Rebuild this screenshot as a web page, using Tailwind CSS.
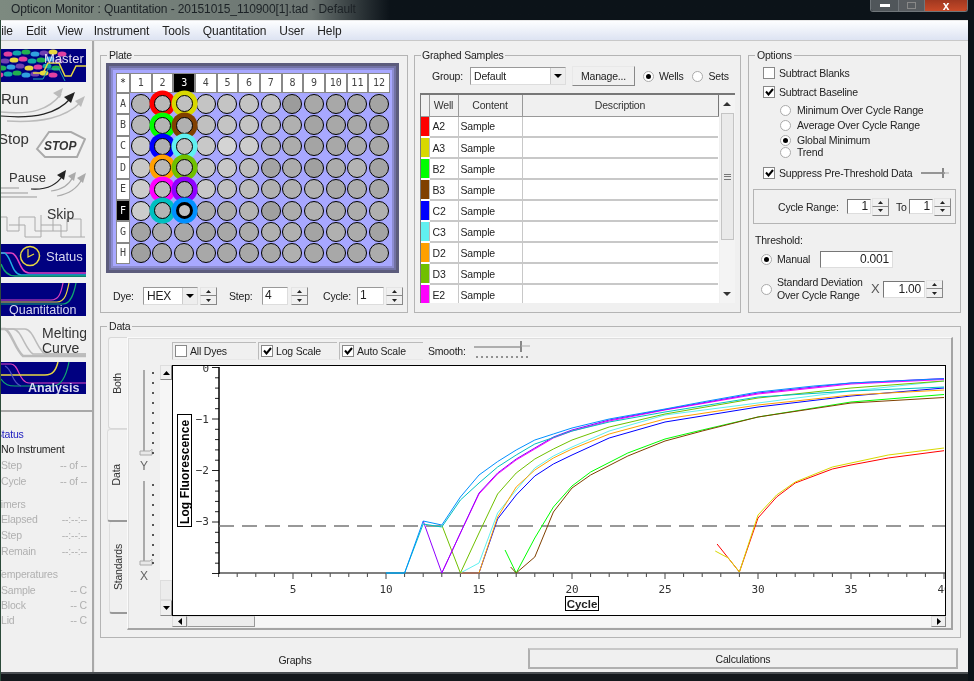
<!DOCTYPE html>
<html lang="en">
<head>
  <meta charset="UTF-8" />
  <title>Opticon Monitor : Quantitation</title>
  <script src="https://cdn.jsdelivr.net/npm/@tailwindcss/browser@4"></script>
</head>
<body class="bg-[#0b1218]">
<div class="w-[974px] h-[681px] overflow-hidden flex flex-col font-['Liberation_Sans',Arial,sans-serif] text-[10.5px] tracking-[-0.2px] leading-[14px] text-[#222] bg-[#0b1218] blur-[0.35px]">

  <!-- Title bar -->
  <div class="h-[20px] shrink-0 flex items-start justify-between bg-gradient-to-r from-[#7d8a80] via-[#6c7572] via-32% to-[#0c1319] to-40%">
    <div class="pl-[11px] pt-[1px] text-[12px] tracking-[-0.1px] leading-[16px] text-[#1c2226] whitespace-nowrap">Opticon Monitor : Quantitation - 20151015_110900[1].tad - Default</div>
    <div class="flex h-[12px] w-[98px] mr-[6px] border border-t-0 border-[#70767a] rounded-b-[3px] overflow-hidden">
      <span class="w-[28px] flex items-center justify-center bg-[#50565a] border-r border-[#70767a]"><span class="w-[10px] h-[3px] bg-white"></span></span>
      <span class="w-[26px] flex items-center justify-center bg-[#585c60] border-r border-[#70767a]"><span class="w-[9px] h-[7px] border border-[#888]"></span></span>
      <span class="flex-1 flex items-center justify-center bg-gradient-to-b from-[#a03820] to-[#c84a28] text-white text-[12px] font-bold leading-[10px]">x</span>
    </div>
  </div>

  <div class="flex-1 min-h-0 flex mr-[6px] border-l border-[#2c4a3a] overflow-hidden">
    <div class="flex-1 min-w-0 flex flex-col">
      <!-- Menu -->
      <div class="h-[20px] shrink-0 flex gap-[13px] items-center text-[12px] tracking-[-0.1px] whitespace-nowrap bg-gradient-to-b from-[#fdfeff] to-[#dde3f2] border-t border-[#e8e8e8] overflow-hidden">
        <span class="-ml-[7px]">File</span><span>Edit</span><span class="-ml-[2px]">View</span><span class="-ml-[2px]">Instrument</span><span>Tools</span><span>Quantitation</span><span>User</span><span>Help</span>
      </div>

      <div class="flex-1 min-h-0 flex bg-[#f0f0f0] border-t border-[#c8c8c8]">
        <!-- Sidebar -->
        <aside class="w-[93px] shrink-0 flex flex-col border-r-[2px] border-[#a8a8a8]">
          <div class="h-[371px] shrink-0 pt-[8px] border-b-[2px] border-[#a8a8a8] overflow-hidden">
            <svg class="block" width="85" height="33" viewBox="0 0 85 33">
              <rect width="85" height="33" fill="#000080"/>
              <g id="master-dots"></g>
              <path d="M32 24 H42 L47 14 H58 L64 27 H70 L75 17 H85" fill="none" stroke="#e8d840" stroke-width="1.5"/>
              <path d="M32 30 H42 L47 20 H58 L64 32" fill="none" stroke="#20b0b0" stroke-width="1"/>
              <text x="43" y="14" font-size="13" letter-spacing="0" fill="#e0dcf0" font-family="Liberation Sans">Master</text>
            </svg>
            <svg class="block" width="85" height="41" viewBox="0 0 85 41">
              <text x="0" y="22" font-size="15" letter-spacing="0" fill="#333" font-family="Liberation Sans">Run</text>
              <path d="M0 30 C30 33 48 28 60 12" fill="none" stroke="#bbb" stroke-width="1.5"/><path d="M62 6 L52 11 L59 16 Z" fill="#bbb"/>
              <path d="M0 34 C34 37 56 32 70 16" fill="none" stroke="#222" stroke-width="1.2"/><path d="M74 10 L63 15 L70 21 Z" fill="#222"/>
              <path d="M6 39 C40 41 64 36 80 20" fill="none" stroke="#bbb" stroke-width="1.5"/><path d="M84 14 L74 19 L80 25 Z" fill="#bbb"/>
            </svg>
            <svg class="block" width="85" height="40" viewBox="0 0 85 40">
              <text x="-3" y="21" font-size="15" letter-spacing="0" fill="#333" font-family="Liberation Sans">Stop</text>
              <path d="M36 26 L48 9 H70 L84 16 L76 34 H44 Z" fill="#f4f4f4" stroke="#aaa" stroke-width="2"/>
              <text x="43" y="27" font-size="12" letter-spacing="0" font-weight="700" font-style="italic" fill="#333" font-family="Liberation Sans">STOP</text>
            </svg>
            <svg class="block" width="85" height="38" viewBox="0 0 85 38">
              <text x="8" y="19" font-size="13" letter-spacing="0" fill="#333" font-family="Liberation Sans">Pause</text>
              <path d="M0 25 H18 M0 30 H27 M0 34 H36" stroke="#999" stroke-width="1" fill="none"/>
              <path d="M30 26 C45 27 56 22 62 12" fill="none" stroke="#222" stroke-width="1.2"/><path d="M65 7 L56 12 L63 17 Z" fill="#222"/>
              <path d="M50 28 C60 27 68 22 72 14" fill="none" stroke="#aaa" stroke-width="1.2"/><path d="M75 9 L67 13 L73 18 Z" fill="#aaa"/>
              <path d="M56 33 C68 31 76 26 81 16" fill="none" stroke="#aaa" stroke-width="1.2"/><path d="M85 10 L76 15 L82 20 Z" fill="#aaa"/>
            </svg>
            <svg class="block" width="85" height="39" viewBox="0 0 85 39">
              <path d="M0 16 H6 V30 H18 V16 H34 V30 H52 V18" fill="none" stroke="#aaa"/>
              <path d="M8 24 H24 V36 H40 V24 H60 V36 H84" fill="none" stroke="#aaa"/>
              <path d="M40 14 V24 M52 30 H66 V18 H80 V36" fill="none" stroke="#aaa"/>
              <text x="46" y="18" font-size="14" letter-spacing="0" fill="#333" font-family="Liberation Sans">Skip</text>
            </svg>
            <svg class="block mt-[4px]" width="85" height="33" viewBox="0 0 85 33">
              <rect width="85" height="33" fill="#000080"/>
              <path d="M0 9 H10 C18 9 18 29 28 29 H85" fill="none" stroke="#e040c0" stroke-width="1.5"/>
              <path d="M0 9 H3 C10 10 10 30 20 31 H85" fill="none" stroke="#20b0e0" stroke-width="1.5"/>
              <path d="M0 20 C3 28 8 32 14 32 H85" fill="none" stroke="#10a870" stroke-width="1.5"/>
              <circle cx="29" cy="12" r="9.5" fill="#000080" stroke="#e8d840" stroke-width="1.5"/><path d="M27 5 V13 L33 10" fill="none" stroke="#e8d840" stroke-width="1.2"/>
              <text x="45" y="17" font-size="13" letter-spacing="0" fill="#d8d8f0" font-family="Liberation Sans">Status</text>
            </svg>
            <svg class="block mt-[6px]" width="85" height="33" viewBox="0 0 85 33">
              <rect width="85" height="33" fill="#000080"/>
              <path d="M0 17 H50 C58 17 60 10 62 0" fill="none" stroke="#e040c0" stroke-width="1.2"/>
              <path d="M0 19 H56 C64 19 66 10 68 0" fill="none" stroke="#e8d840" stroke-width="1.2"/>
              <path d="M0 21 H62 C70 21 73 10 75 0" fill="none" stroke="#10a870" stroke-width="1.2"/>
              <text x="8" y="31" font-size="12.5" letter-spacing="0" fill="#d8d8f0" font-family="Liberation Sans">Quantitation</text>
            </svg>
            <svg class="block mt-[7px]" width="85" height="37" viewBox="0 0 85 37">
              <path d="M0 6 H24 C32 6 36 26 44 31 H85" fill="none" stroke="#bbb" stroke-width="1.5"/>
              <path d="M0 6 H12 C20 6 24 26 32 31 H85" fill="none" stroke="#bbb" stroke-width="1.5"/>
              <path d="M0 6 H4 C10 8 14 26 22 33 H85" fill="none" stroke="#bbb" stroke-width="2.5"/>
              <text x="41" y="15" font-size="14" letter-spacing="0" fill="#333" font-family="Liberation Sans">Melting</text>
              <text x="41" y="30" font-size="14" letter-spacing="0" fill="#333" font-family="Liberation Sans">Curve</text>
            </svg>
            <svg class="block mt-[2px]" width="85" height="32" viewBox="0 0 85 32">
              <rect width="85" height="32" fill="#000080"/>
              <path d="M0 2 H10 C18 2 18 21 28 21 H85" fill="none" stroke="#e040c0" stroke-width="1.2"/>
              <path d="M0 13 H44 C52 13 55 8 57 0" fill="none" stroke="#e8d840" stroke-width="1.5"/>
              <path d="M0 17 C4 23 8 24 14 24 H52 C62 24 66 10 68 0" fill="none" stroke="#10a870" stroke-width="1.2"/>
              <path d="M4 4 C12 8 10 20 20 24" fill="none" stroke="#5050c0" stroke-width="1.2"/>
              <text x="27" y="30" font-size="12.5" letter-spacing="0" font-weight="700" fill="#d8d8f0" font-family="Liberation Sans">Analysis</text>
            </svg>
          </div>
          <!-- Instrument status -->
          <div class="flex-1 pt-[15px] text-[#b0b0b0] overflow-hidden">
            <div class="-ml-[6px] h-[15px] text-[#2020c0]">Status</div>
            <div class="h-[16px] text-[#222] whitespace-nowrap">No Instrument</div>
            <div class="flex justify-between pr-[5px] h-[16px]"><span>Step</span><span>-- of --</span></div>
            <div class="flex justify-between pr-[5px] h-[16px]"><span>Cycle</span><span>-- of --</span></div>
            <div class="-ml-[6px] mt-[7px] h-[15px]">Timers</div>
            <div class="flex justify-between pr-[5px] h-[16px]"><span>Elapsed</span><span>--:--:--</span></div>
            <div class="flex justify-between pr-[5px] h-[16px]"><span>Step</span><span>--:--:--</span></div>
            <div class="flex justify-between pr-[5px] h-[16px]"><span>Remain</span><span>--:--:--</span></div>
            <div class="-ml-[5px] mt-[7px] h-[16px]">Temperatures</div>
            <div class="flex justify-between pr-[5px] h-[15px]"><span>Sample</span><span>-- C</span></div>
            <div class="flex justify-between pr-[5px] h-[15px]"><span>Block</span><span>-- C</span></div>
            <div class="flex justify-between pr-[5px] h-[15px]"><span>Lid</span><span>-- C</span></div>
          </div>
        </aside>

        <!-- Main area -->
        <main class="flex-1 min-w-0 flex flex-col pl-[5px] pt-[7px] border-l border-[#e8e8e8]">
          <div class="flex gap-[6px] h-[265px] shrink-0">

            <!-- Plate -->
            <fieldset class="w-[308px] h-[265px] border border-[#b4b4b4]">
              <legend class="ml-[6px] px-[2px] h-[14px]">Plate</legend>
              <div class="ml-[5px] mt-[1px] w-[293px] h-[210px] border-[3px] border-[#5c5c7c] bg-[#a8a8ff] pl-[7px] pt-[7px] shadow-[inset_0_0_0_2px_#7272a4,inset_0_0_0_4px_#8c8cd0]">
                <div id="plate" class="grid grid-cols-[14px_repeat(12,21.67px)] grid-rows-[20px_repeat(8,21.4px)] font-['DejaVu_Sans_Mono',monospace] text-[10px] tracking-normal"></div>
              </div>
              <div class="flex items-center h-[18px] mt-[14px]">
                <span class="ml-[12px] w-[30px]">Dye:</span>
                <span class="w-[55px] h-[18px] flex items-center justify-between pl-[3px] bg-white border border-[#999] border-r-[#ddd] border-b-[#ddd] text-[12px]">HEX<span class="w-[15px] h-full flex items-center justify-center bg-[#eee] border-l border-[#ccc]"><svg width="8" height="4"><path d="M0 0H8L4 4Z" fill="#000"/></svg></span></span>
                <span data-spin class="ml-[2px]"></span>
                <span class="ml-[12px] w-[33px]">Step:</span>
                <span class="w-[26px] h-[18px] pl-[2px] bg-white border border-[#999] border-r-[#ddd] border-b-[#ddd] text-[12px]">4</span>
                <span data-spin class="ml-[3px]"></span>
                <span class="ml-[15px] w-[34px]">Cycle:</span>
                <span class="w-[27px] h-[18px] pl-[2px] bg-white border border-[#999] border-r-[#ddd] border-b-[#ddd] text-[12px]">1</span>
                <span data-spin class="ml-[2px]"></span>
              </div>
            </fieldset>

            <!-- Graphed samples -->
            <fieldset class="w-[327px] h-[265px] border border-[#b4b4b4]">
              <legend class="ml-[6px] px-[1px] h-[14px]">Graphed Samples</legend>
              <div class="flex items-center h-[20px] mt-[4px]">
                <span class="ml-[17px] w-[38px]">Group:</span>
                <span class="w-[96px] h-[18px] flex items-center justify-between pl-[3px] bg-white border border-[#999] border-r-[#ddd] border-b-[#ddd]">Default<span class="w-[15px] h-full flex items-center justify-center bg-[#eee] border-l border-[#ccc]"><svg width="8" height="4"><path d="M0 0H8L4 4Z" fill="#000"/></svg></span></span>
                <span class="ml-[6px] w-[63px] h-[20px] flex items-center justify-center bg-[#f0f0f0] border border-[#e8e8e8] border-r-[#888] border-b-[#888]">Manage...</span>
                <span class="ml-[8px] w-[11px] h-[11px] rounded-full border border-[#aaa] bg-white flex items-center justify-center"><span class="w-[5px] h-[5px] rounded-full bg-black"></span></span>
                <span class="ml-[5px]">Wells</span>
                <span class="ml-[9px] w-[11px] h-[11px] rounded-full border border-[#aaa] bg-white"></span>
                <span class="ml-[5px]">Sets</span>
              </div>
              <div class="ml-[5px] mt-[7px] w-[315px] h-[210px] flex border-t-[2px] border-l border-[#777] overflow-hidden">
                <table class="table-fixed w-[297px] h-fit border-collapse bg-white">
                  <colgroup><col class="w-[8px]"><col class="w-[29px]"><col class="w-[64px]"><col class="w-[196px]"></colgroup>
                  <thead>
                    <tr class="h-[21px] bg-[#f0f0f0] text-[#333]">
                      <th class="border border-[#999] border-l-0 border-t-0 font-normal"></th>
                      <th class="border border-[#999] border-t-0 font-normal">Well</th>
                      <th class="border border-[#999] border-t-0 font-normal">Content</th>
                      <th class="border border-[#999] border-t-0 border-r-[#777] font-normal">Description</th>
                    </tr>
                  </thead>
                  <tbody id="samples"></tbody>
                </table>
                <div class="w-[15px] h-full ml-[1px] flex flex-col items-center bg-[#f4f4f4]">
                  <span class="h-[18px] flex items-center"><svg width="8" height="4"><path d="M4 0L8 4H0Z" fill="#333"/></svg></span>
                  <span class="w-[13px] h-[127px] bg-[#eaeaea] border border-[#c4c4c4] flex items-center justify-center"><span class="w-[7px] h-[6px] border-y border-[#777] bg-[linear-gradient(#777,#777)] bg-[length:100%_1px] bg-center bg-no-repeat"></span></span>
                  <span class="flex-1"></span>
                  <span class="h-[18px] flex items-center"><svg width="8" height="4"><path d="M0 0H8L4 4Z" fill="#333"/></svg></span>
                </div>
              </div>
            </fieldset>

            <!-- Options -->
            <fieldset class="w-[213px] h-[265px] ml-[1px] border border-[#b4b4b4]">
              <legend class="ml-[6px] px-[2px] h-[14px]">Options</legend>
              <div class="flex items-center h-[14px] mt-[4px] ml-[14px]"><span class="w-[12px] h-[12px] border border-[#888] bg-white"></span><span class="ml-[4px]">Subtract Blanks</span></div>
              <div class="flex items-center h-[14px] mt-[5px] ml-[14px]"><span class="w-[12px] h-[12px] border border-[#888] bg-white flex items-center justify-center"><svg width="9" height="8"><path d="M1 3.5L3.5 6.5L8 1" fill="none" stroke="#000" stroke-width="2"/></svg></span><span class="ml-[4px]">Subtract Baseline</span></div>
              <div class="flex items-center h-[14px] mt-[4px] ml-[31px]"><span class="w-[11px] h-[11px] rounded-full border border-[#aaa] bg-white"></span><span class="ml-[6px]">Minimum Over Cycle Range</span></div>
              <div class="flex items-center h-[14px] mt-[1px] ml-[31px]"><span class="w-[11px] h-[11px] rounded-full border border-[#aaa] bg-white"></span><span class="ml-[6px]">Average Over Cycle Range</span></div>
              <div class="flex items-center h-[14px] mt-[1px] ml-[31px]"><span class="w-[11px] h-[11px] rounded-full border border-[#aaa] bg-white flex items-center justify-center"><span class="w-[5px] h-[5px] rounded-full bg-black"></span></span><span class="ml-[6px]">Global Minimum</span></div>
              <div class="flex items-center h-[12px] -mt-[1px] ml-[31px]"><span class="w-[11px] h-[11px] rounded-full border border-[#aaa] bg-white"></span><span class="ml-[6px]">Trend</span></div>
              <div class="flex items-center h-[14px] mt-[8px] ml-[14px]"><span class="w-[12px] h-[12px] border border-[#888] bg-white flex items-center justify-center"><svg width="9" height="8"><path d="M1 3.5L3.5 6.5L8 1" fill="none" stroke="#000" stroke-width="2"/></svg></span><span class="ml-[4px] whitespace-nowrap">Suppress Pre-Threshold Data</span>
                <svg class="ml-[8px]" width="28" height="12"><path d="M0 6H24" stroke="#777" stroke-width="1.5"/><path d="M22 1V11" stroke="#888" stroke-width="2"/><path d="M22 6H28" stroke="#aaa"/></svg>
              </div>
              <div class="ml-[4px] mt-[9px] w-[203px] h-[35px] flex items-center border border-[#b4b4b4]">
                <span class="ml-[24px] w-[69px]">Cycle Range:</span>
                <span class="w-[24px] h-[15px] pr-[2px] text-right leading-[13px] bg-white border border-[#777] border-r-[#ddd] border-b-[#ddd] text-[12px]">1</span>
                <span data-spin class="ml-[1px]"></span>
                <span class="ml-[7px] w-[13px]">To</span>
                <span class="w-[24px] h-[15px] pr-[2px] text-right leading-[13px] bg-white border border-[#777] border-r-[#ddd] border-b-[#ddd] text-[12px]">1</span>
                <span data-spin class="ml-[1px]"></span>
              </div>
              <div class="ml-[6px] mt-[9px] h-[14px]">Threshold:</div>
              <div class="flex items-center h-[18px] mt-[3px] ml-[12px]">
                <span class="w-[11px] h-[11px] rounded-full border border-[#aaa] bg-white flex items-center justify-center"><span class="w-[5px] h-[5px] rounded-full bg-black"></span></span>
                <span class="ml-[5px] w-[43px]">Manual</span>
                <span class="w-[73px] h-[17px] pr-[3px] text-right leading-[15px] bg-white border border-[#777] border-r-[#ddd] border-b-[#ddd] text-[12px]">0.001</span>
              </div>
              <div class="flex items-center h-[26px] mt-[8px] ml-[12px]">
                <span class="w-[11px] h-[11px] rounded-full border border-[#aaa] bg-white"></span>
                <span class="ml-[5px] w-[92px] leading-[13px] whitespace-nowrap">Standard Deviation<br>Over Cycle Range</span>
                <span class="ml-[2px] w-[12px] text-[13px] text-[#555]">X</span>
                <span class="w-[42px] h-[17px] pr-[3px] text-right leading-[15px] bg-white border border-[#777] border-r-[#ddd] border-b-[#ddd] text-[12px]">1.00</span>
                <span data-spin class="ml-[1px]"></span>
              </div>
            </fieldset>
          </div>

          <!-- Data panel -->
          <fieldset class="w-[861px] h-[319px] mt-[6px] shrink-0 border border-[#b4b4b4]">
            <legend class="ml-[6px] px-[2px] h-[14px]">Data</legend>
            <div class="flex mt-[4px] ml-[6px]">
              <div class="w-[20px] flex flex-col items-end text-[#333]">
                <span class="w-[19px] h-[92px] flex items-center justify-center pr-[2px] border border-r-0 border-[#d8d8d8] rounded-l-[3px] bg-[#f4f4f4]"><span class="[writing-mode:vertical-rl] rotate-180">Both</span></span>
                <span class="w-[20px] h-[93px] flex items-center justify-center pr-[3px] border-t border-l border-[#ddd] border-b-[2px] border-b-[#999] rounded-l-[3px] bg-[#f2f2f2]"><span class="[writing-mode:vertical-rl] rotate-180">Data</span></span>
                <span class="w-[18px] h-[92px] flex items-center justify-center pr-[2px] border-l border-[#ddd] border-b-[2px] border-b-[#999] rounded-l-[3px]"><span class="[writing-mode:vertical-rl] rotate-180">Standards</span></span>
              </div>
              <div class="w-[826px] h-[293px] border-t border-l border-[#fafafa] border-r-[2px] border-b-[2px] border-r-[#a4a4a4] border-b-[#a4a4a4] shadow-[inset_1px_1px_0_#ddd]">
                <!-- toolbar -->
                <div class="flex items-center h-[19px] mt-[3px] ml-[44px]">
                  <span class="w-[84px] h-[18px] flex items-center pl-[2px] border-t border-l border-[#bbb] border-b border-b-[#e8e8e8]"><span class="w-[12px] h-[12px] border border-[#888] bg-white"></span><span class="ml-[3px]">All Dyes</span></span>
                  <span class="ml-[2px] w-[79px] h-[18px] flex items-center pl-[2px] border-t border-l border-[#bbb] border-b border-b-[#e8e8e8]"><span class="w-[12px] h-[12px] border border-[#888] bg-white flex items-center justify-center"><svg width="9" height="8"><path d="M1 3.5L3.5 6.5L8 1" fill="none" stroke="#000" stroke-width="2"/></svg></span><span class="ml-[3px]">Log Scale</span></span>
                  <span class="ml-[2px] w-[84px] h-[18px] flex items-center pl-[2px] border-t border-l border-[#bbb] border-b border-b-[#e8e8e8]"><span class="w-[12px] h-[12px] border border-[#888] bg-white flex items-center justify-center"><svg width="9" height="8"><path d="M1 3.5L3.5 6.5L8 1" fill="none" stroke="#000" stroke-width="2"/></svg></span><span class="ml-[3px]">Auto Scale</span></span>
                  <span class="ml-[5px] w-[46px]">Smooth:</span>
                  <svg width="58" height="20" viewBox="0 0 58 20">
                    <path d="M0 6H46" stroke="#999" stroke-width="1.5"/><path d="M47 0V11" stroke="#888" stroke-width="2"/><path d="M47 5H56" stroke="#aaa"/>
                    <path d="M3 15V17M8 15V17M13 15V17M18 15V17M23 15V17M28 15V17M33 15V17M38 15V17M43 15V17M48 15V17M53 15V17" stroke="#333"/>
                  </svg>
                </div>
                <div class="flex mt-[5px] ml-[7px]">
                  <!-- Y / X sliders -->
                  <svg width="25" height="262" viewBox="0 0 25 262" class="shrink-0">
                    <path d="M9 5V88M9 116V198" stroke="#aaa" stroke-width="2"/>
                    <path d="M5 86H15L17 84V90H5ZM5 196H15L17 194V200H5Z" fill="#e8e8e8" stroke="#aaa"/>
                    <path d="M17 8H19M17 18H19M17 28H19M17 38H19M17 48H19M17 58H19M17 68H19M17 78H19M17 88H19M17 120H19M17 130H19M17 140H19M17 150H19M17 160H19M17 170H19M17 180H19M17 190H19M17 198H19" stroke="#222" stroke-width="1.5"/>
                    <text x="9" y="105" text-anchor="middle" font-size="12" fill="#666">Y</text>
                    <text x="9" y="215" text-anchor="middle" font-size="12" fill="#666">X</text>
                  </svg>
                  <!-- vertical scrollbar -->
                  <div class="w-[12px] h-[251px] shrink-0 flex flex-col bg-[#f6f6f6]">
                    <span class="h-[15px] flex items-center justify-center bg-[#f0f0f0] border border-[#ddd] border-r-[#888] border-b-[#888]"><svg width="7" height="4"><path d="M3.5 0L7 4H0Z" fill="#000"/></svg></span>
                    <span class="flex-1"></span>
                    <span class="h-[20px] bg-[#ececec] border border-[#ddd]"></span>
                    <span class="h-[16px] flex items-center justify-center bg-[#f0f0f0] border border-[#ddd] border-r-[#888] border-b-[#888]"><svg width="7" height="4"><path d="M0 0H7L3.5 4Z" fill="#000"/></svg></span>
                  </div>
                  <div class="w-[774px] shrink-0">
                    <div class="w-[774px] h-[251px] border border-black bg-white overflow-hidden"><svg id="chart" class="block" width="772" height="249" viewBox="173 366 772 249"></svg></div>
                    <!-- horizontal scrollbar -->
                    <div class="flex h-[11px] bg-[#f6f6f6]">
                      <span class="w-[15px] flex items-center justify-center bg-[#f0f0f0] border border-[#ddd] border-r-[#888] border-b-[#888]"><svg width="4" height="7"><path d="M4 0V7L0 3.5Z" fill="#000"/></svg></span>
                      <span class="w-[68px] bg-[#ececec] border border-[#ddd] border-r-[#999] border-b-[#999]"></span>
                      <span class="flex-1"></span>
                      <span class="w-[15px] flex items-center justify-center bg-[#f0f0f0] border border-[#ddd] border-r-[#888] border-b-[#888]"><svg width="4" height="7"><path d="M0 0V7L4 3.5Z" fill="#000"/></svg></span>
                    </div>
                  </div>
                </div>
              </div>
            </div>
          </fieldset>

          <!-- Bottom tabs -->
          <div class="flex flex-1 min-h-0">
            <div class="w-[428px] pt-[15px] pr-[38px] text-center">Graphs</div>
            <div class="w-[430px] h-[21px] mt-[10px] flex items-center justify-center border-[2px] border-[#b0b0b0] border-t-[#c8c8c8] bg-[#f0f0f0]">Calculations</div>
          </div>
        </main>
      </div>
      <div class="h-[9px] shrink-0 bg-[#14181c] border-t-[2px] border-[#4a4e52]"></div>
    </div>
  </div>
</div>

<script>
  // wells, one row per plate row, grey value of each well
  const greys = [
    'b4 b8 c0 c4 c4 c4 c0 9c a8 a8 a8 a4',
    'b8 b4 b0 c0 c4 c4 b8 b0 a4 a8 a8 a4',
    'c8 b0 c0 c8 d4 cc b4 ac a4 a8 ac a8',
    'c8 b8 b8 c4 c8 bc a4 ac a0 ac b4 a4',
    'cc bc b0 c8 c0 bc b0 b0 b0 a8 ac a8',
    'cc b4 c0 ac ac b4 a0 ac b0 ac ac b0',
    'a4 ac a8 a4 a8 ac b0 b0 a4 b0 ac a4',
    'a0 a8 a8 a8 a8 a8 a8 b0 a8 a8 a8 ac'
  ].map(r => r.split(' '));
  const dyes = {
    A2:'#ff0000', A3:'#d8d800', B2:'#00ff00', B3:'#804000', C2:'#0000ff', C3:'#60f0f0',
    D2:'#ffa000', D3:'#70c000', E2:'#ff00ff', E3:'#9000ff', F2:'#00c0c0', F3:'#0090ff'
  };
  const rows = 'ABCDEFGH'.split('');

  let plate = '<span class="flex items-center justify-center bg-white border border-[#888]">*</span>';
  for (let c = 1; c <= 12; c++) {
    plate += c === 3
      ? `<span class="flex items-center justify-center bg-black text-white border border-[#888]">${c}</span>`
      : `<span class="flex items-center justify-center bg-white text-[#444] border border-[#888]">${c}</span>`;
  }
  rows.forEach((r, ri) => {
    plate += r === 'F'
      ? `<span class="flex items-center justify-center bg-black text-white border border-[#888]">${r}</span>`
      : `<span class="flex items-center justify-center bg-white text-[#444] border border-[#888]">${r}</span>`;
    for (let c = 1; c <= 12; c++) {
      const dye = dyes[r + c];
      const g = greys[ri][c - 1];
      const bg = '#' + g + g + g;
      if (dye) {
        const inner = r + c === 'F3' ? 'border-[3px]' : 'border';
        plate += `<span class="relative z-10 flex items-center justify-center"><span class="w-[17px] h-[17px] rounded-full ${inner} border-black" style="background:${bg};box-shadow:0 0 0 4.5px ${dye}"></span></span>`;
      } else {
        plate += `<span class="flex items-center justify-center"><span class="w-[20px] h-[20px] rounded-full border border-black" style="background:${bg}"></span></span>`;
      }
    }
  });
  document.getElementById('plate').innerHTML = plate;

  // spin buttons
  document.querySelectorAll('[data-spin]').forEach(el => {
    el.classList.add('inline-flex', 'flex-col', 'w-[17px]', 'h-[18px]', 'shrink-0');
    el.innerHTML = `
      <span class="h-[9px] flex items-center justify-center border-t border-l border-[#e4e4e4] border-r border-r-[#888] border-b border-b-[#888]"><svg width="5" height="3"><path d="M2.5 0L5 3H0Z" fill="#222"/></svg></span>
      <span class="h-[9px] flex items-center justify-center border-l border-[#e4e4e4] border-r border-r-[#888] border-b border-b-[#888]"><svg width="5" height="3"><path d="M0 0H5L2.5 3Z" fill="#222"/></svg></span>`;
  });

  // sample table
  document.getElementById('samples').innerHTML = Object.entries(dyes).slice(0, 9).map(([well, col]) => `
    <tr class="h-[21px]">
      <td class="border-r border-[#bbb] border-b-[2px] border-b-white" style="background:${col}"></td>
      <td class="border-r border-b-[2px] border-[#c8c8c8] pl-[3px]">${well}</td>
      <td class="border-r border-b-[2px] border-[#c8c8c8] pl-[2px]">Sample</td>
      <td class="border-b-[2px] border-[#c8c8c8]"></td>
    </tr>`).join('');

  // dots of the Master logo
  const dotCols = ['#e040a0', '#10a8a8', '#20b050', '#30a0e0', '#7040b0', '#e8d840'];
  let dots = '';
  for (let i = 0; i < 7; i++) {
    for (let j = 0; j < 4; j++) {
      dots += `<ellipse cx="${i * 9 - 2 + j * 3}" cy="${26 - j * 7 - (i % 3)}" rx="4.5" ry="2.6" fill="${dotCols[(i + j * 2) % 6]}"/>`;
    }
  }
  document.getElementById('master-dots').innerHTML = dots;

  // chart
  const xAt = c => 386 + (c - 10) * 18.6;
  const curves = [
    ['#ff0000', '27.8:544 29:572 30:518 31:497 32:483 34:469 35:465 37:458 40:450.7'],
    ['#d8d800', '27.7:551 28.4:558 29:572 30:515 31:495 32:482 34:467 35:463 37:455 40:448'],
    ['#00ff00', '16.4:550 17:573 18:538 19:507 20:486 21:472 23:453 25:439 27:430 30:417 35:402 40:394.5'],
    ['#804000', '16.7:567 17:573 18:557 19:512 20:488 21:475 23:456 25:441 27:431 30:417 35:403 40:397.5'],
    ['#0000ff', '14:573 15:573 16:519 17:495 18:476 19:464 20:455 22:438 25:422 30:407 35:396 40:388'],
    ['#60f0f0', '14:573 15:563 16:513 17:490 18:468 19:456 20:447 22:431 25:415 30:403 35:391 40:381'],
    ['#ffa000', '14:573 15:573 16:517 17:487 18:470 19:458 20:449 22:434 25:419 30:405 35:395 40:390'],
    ['#70c000', '13:525 14:573 15:533 16:494 17:473 18:459 19:449 20:440 22:427 25:414 30:398 35:388 40:381'],
    ['#ff00ff', '13:573 14:533 15:494 16:474 17:460 18:449 19:438 20:431 22:421 25:410 30:394 35:384 40:379.5'],
    ['#9000ff', '12:521 13:573 14:533 15:493 16:473 17:459 18:448 19:437 20:430 22:420 25:409.5 30:393 35:383 40:378.5'],
    ['#00c0c0', '10:573 11:573 12:524 13:527 14:500 15:483 16:467 17:455 18:444 20:431 22:422 25:412 30:397 35:391 40:387'],
    ['#0090ff', '10:573 11:573 12:521 13:525 14:497 15:475 16:461.6 17:450 18:440 19:434 20:428 22:419 25:409 27:402 30:392 33:386 35:383 40:378.7']
  ];
  let svg = '';
  for (let c = 1; c <= 40; c++) {
    const x = xAt(c);
    svg += `<path d="M${x} 573V${c % 5 === 0 ? 579 : 577}" stroke="#444"/>`;
    if (c % 5 === 0) svg += `<text x="${x}" y="593" text-anchor="middle" font-size="11" letter-spacing="0" fill="#333" font-family="DejaVu Sans Mono">${c}</text>`;
  }
  for (let i = 0; i <= 20; i++) {
    const y = 367.5 + i * 10.3;
    svg += `<path d="M${i % 5 === 0 ? 212 : 215} ${y}H219" stroke="#222"/>`;
  }
  ['0', '−1', '−2', '−3'].forEach((t, i) => {
    svg += `<text x="209" y="${371.5 + i * 51}" text-anchor="end" font-size="11" letter-spacing="0" fill="#333" font-family="DejaVu Sans Mono">${t}</text>`;
  });
  svg += '<path d="M219 573H946" stroke="#555" stroke-width="1.5"/><path d="M219 367V574" stroke="#000" stroke-width="1.5"/>';
  svg += '<path d="M219 526H946" stroke="#777" stroke-width="1.5" stroke-dasharray="15 8"/>';
  curves.forEach(([col, pts]) => {
    const p = pts.split(' ').map(s => { const [c, y] = s.split(':'); return xAt(+c) + ',' + y; }).join(' ');
    svg += `<polyline points="${p}" fill="none" stroke="${col}" stroke-width="1"/>`;
  });
  svg += '<rect x="177.5" y="414.5" width="14" height="112" fill="#fff" stroke="#000"/>';
  svg += '<text transform="translate(188.5 524) rotate(-90)" font-size="12" letter-spacing="0.1" font-weight="700" font-family="Liberation Sans" fill="#000">Log Fluorescence</text>';
  svg += '<rect x="565.5" y="596.5" width="33" height="14" fill="#fff" stroke="#000"/>';
  svg += '<text x="582" y="607.5" text-anchor="middle" font-size="11.5" letter-spacing="0" font-weight="700" font-family="Liberation Sans" fill="#222">Cycle</text>';
  document.getElementById('chart').innerHTML = svg;
</script>
</body>
</html>
